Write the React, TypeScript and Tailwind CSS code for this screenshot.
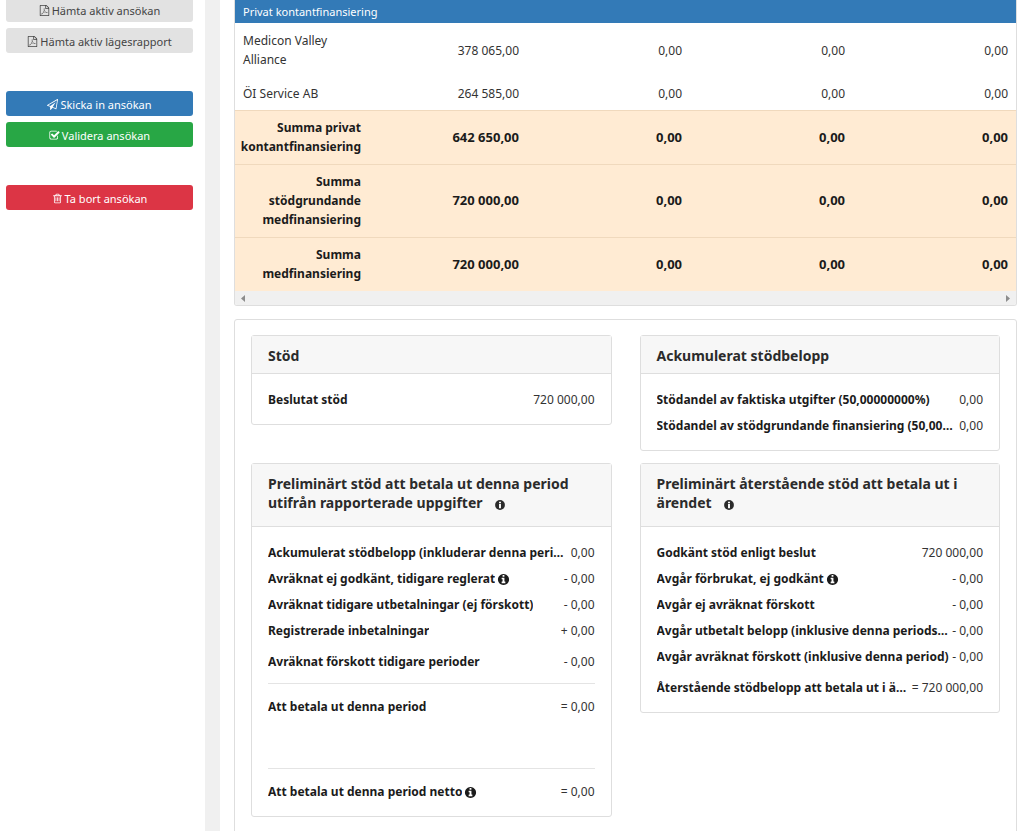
import React from "react"
import clsx from "clsx"

const icons = {
  pdf: "M1596 380q28 28 48 76t20 88v1152q0 40-28 68t-68 28h-1344q-40 0-68-28t-28-68v-1600q0-40 28-68t68-28h896q40 0 88 20t76 48zm-444-244v376h376q-10-29-22-41l-313-313q-12-12-41-22zm384 1528v-1024h-416q-40 0-68-28t-28-68v-416h-768v1536h1280zm-514-593q33 26 84 56 59-7 117-7 147 0 177 49 16 22 2 52 0 1-1 2l-2 2v1q-6 38-71 38-48 0-115-20t-130-53q-221 24-392 83-153 262-242 262-15 0-28-7l-24-12q-1-1-6-5-10-10-6-36 9-40 56-91.5t132-96.5q14-9 23 6 2 2 2 4 52-85 107-197 68-136 104-262-24-82-30.5-159.5t6.5-127.5q11-40 42-40h22q23 0 35 15 18 21 9 68-2 6-4 8 1 3 1 8v30q-2 123-14 192 55 164 146 238zm-576 411q52-24 137-158-51 40-87.5 84t-49.5 74zm398-920q-15 42-2 132 1-7 7-44 0-3 7-43 1-4 4-8-1-1-1-2-1-2-1-3-1-22-13-36 0 1-1 2v2zm-124 661q135-54 284-81-2-1-13-9.5t-16-13.5q-76-67-127-176-27 86-83 197-30 56-45 83zm646-16q-24-24-140-24 76 28 124 28 14 0 18-1 0-1-2-3z",
  send: "M1764 11q33 24 27 64l-256 1536q-5 29-32 45-14 8-31 8-11 0-24-5l-527-215-298 327q-18 21-47 21-14 0-23-4-19-7-30-23.5t-11-36.5v-452l-472-193q-37-14-40-55-3-39 32-59l1664-960q35-21 68 2zm-342 1499l221-1323-1434 827 336 137 863-639-478 797z",
  check: "M1472 930v318q0 119-84.5 203.5t-203.5 84.5h-832q-119 0-203.5-84.5t-84.5-203.5v-832q0-119 84.5-203.5t203.5-84.5h832q63 0 117 25 15 7 18 23 3 17-9 29l-49 49q-10 10-23 10-3 0-9-2-23-6-45-6h-832q-66 0-113 47t-47 113v832q0 66 47 113t113 47h832q66 0 113-47t47-113v-254q0-13 9-22l64-64q10-10 23-10 6 0 12 3 20 8 20 29zm231-489l-814 814q-24 24-57 24t-57-24l-430-430q-24-24-24-57t24-57l110-110q24-24 57-24t57 24l263 263 647-647q24-24 57-24t57 24l110 110q24 24 24 57t-24 57z",
  trash: "M704 736v576q0 14-9 23t-23 9h-64q-14 0-23-9t-9-23v-576q0-14 9-23t23-9h64q14 0 23 9t9 23zm256 0v576q0 14-9 23t-23 9h-64q-14 0-23-9t-9-23v-576q0-14 9-23t23-9h64q14 0 23 9t9 23zm256 0v576q0 14-9 23t-23 9h-64q-14 0-23-9t-9-23v-576q0-14 9-23t23-9h64q14 0 23 9t9 23zm128 724v-948h-896v948q0 22 7 40.5t14.5 27 10.5 8.5h832q3 0 10.5-8.5t14.5-27 7-40.5zm-672-1076h448l-48-117q-7-9-17-11h-317q-10 2-17 11zm928 32v64q0 14-9 23t-23 9h-96v948q0 83-47 143.5t-113 60.5h-832q-66 0-113-58.5t-47-141.5v-952h-96q-14 0-23-9t-9-23v-64q0-14 9-23t23-9h309l70-167q15-37 54-63t79-26h320q40 0 79 26t54 63l70 167h309q14 0 23 9t9 23z",
  info: "M1152 1376v-160q0-14-9-23t-23-9h-96v-512q0-14-9-23t-23-9h-320q-14 0-23 9t-9 23v160q0 14 9 23t23 9h96v320h-96q-14 0-23 9t-9 23v160q0 14 9 23t23 9h448q14 0 23-9t9-23zm-128-896v-160q0-14-9-23t-23-9h-192q-14 0-23 9t-9 23v160q0 14 9 23t23 9h192q14 0 23-9t9-23zm640 416q0 209-103 385.5t-279.5 279.5-385.5 103-385.5-103-279.5-279.5-103-385.5 103-385.5 279.5-279.5 385.5-103 385.5 103 279.5 279.5 103 385.5z",
}

function Icon({ name, className }: { name: keyof typeof icons; className?: string }) {
  return (
    <svg viewBox="0 0 1792 1792" fill="currentColor" aria-hidden="true" className={clsx("shrink-0", className)}>
      <path d={icons[name]} />
    </svg>
  )
}

function HeadingInfo() {
  return (
    <svg viewBox="0 0 20 20" aria-hidden="true" className="ml-3 inline-block h-[10px] w-[10px] align-[-2px]">
      <circle cx="10" cy="10" r="9.8" fill="currentColor" />
      <path d="M8 3.4h4v2.8H8zM8 7.4h4v9.2H8z" fill="#f7f7f7" />
    </svg>
  )
}

interface SideButtonProps {
  icon: keyof typeof icons
  className: string
  children: React.ReactNode
}

function SideButton({ icon, className, children }: SideButtonProps) {
  return (
    <button
      type="button"
      className={clsx("flex h-[25px] w-full items-center justify-center gap-[2px] rounded-[3px] pt-[2px] text-[11px] leading-[19px]", className)}
    >
      <Icon name={icon} className="h-[11px] w-[11px]" />
      {children}
    </button>
  )
}

const financiers = [
  { name: "Medicon Valley Alliance", values: ["378 065,00", "0,00", "0,00", "0,00"] },
  { name: "ÖI Service AB", values: ["264 585,00", "0,00", "0,00", "0,00"] },
]

const sums = [
  { name: "Summa privat kontantfinansiering", values: ["642 650,00", "0,00", "0,00", "0,00"] },
  { name: "Summa stödgrundande medfinansiering", values: ["720 000,00", "0,00", "0,00", "0,00"] },
  { name: "Summa medfinansiering", values: ["720 000,00", "0,00", "0,00", "0,00"] },
]

function FinancingTable() {
  return (
    <div className="overflow-hidden rounded-b-[3px] border-x border-b border-[#dedede]">
      <table className="w-full table-fixed border-separate border-spacing-0 text-[12px] leading-[19px]">
        <colgroup>
          <col className="w-[134px]" />
          <col className="w-[158px]" />
          <col />
          <col />
          <col />
        </colgroup>
        <thead>
          <tr>
            <th colSpan={5} className="bg-[#337ab7] px-2 py-[2px] text-left text-[11px] font-normal text-white">
              Privat kontantfinansiering
            </th>
          </tr>
        </thead>
        <tbody>
          {financiers.map((row) => (
            <tr key={row.name}>
              <td className="px-2 pt-2 pb-[7px]">{row.name}</td>
              {row.values.map((value, i) => (
                <td key={i} className="px-2 pt-2 pb-[7px] text-right">{value}</td>
              ))}
            </tr>
          ))}
        </tbody>
        <tfoot className="bg-[#ffebd3] text-[#1b1b1b]">
          {sums.map((row) => (
            <tr key={row.name}>
              <th scope="row" className="border-t border-[#f0d9bd] pt-[7px] pr-2 pb-2 pl-1 text-right font-bold">{row.name}</th>
              {row.values.map((value, i) => (
                <td key={i} className="border-t border-[#f0d9bd] px-2 pt-[7px] pb-2 text-right text-[13px] font-bold">{value}</td>
              ))}
            </tr>
          ))}
        </tfoot>
      </table>
      <div className="flex h-[14px] items-center justify-between bg-[#f0f0f0] px-[6px] text-[#8c8c8c]">
        <svg viewBox="0 0 4 7" className="h-[7px] w-1" fill="currentColor"><path d="M4 0v7L0 3.5z" /></svg>
        <svg viewBox="0 0 4 7" className="h-[7px] w-1" fill="currentColor"><path d="M0 0v7l4-3.5z" /></svg>
      </div>
    </div>
  )
}

interface PanelProps {
  title: string
  info?: boolean
  children: React.ReactNode
}

function Panel({ title, info, children }: PanelProps) {
  return (
    <section className="min-w-0 rounded-[3px] border border-[#dedede] bg-white">
      <header className={clsx("border-b border-[#dedede] bg-[#f7f7f7] px-4 pt-[10px] pb-2", info && "min-h-[63px]")}>
        <h3 className="text-[14px] leading-[19px] font-bold text-[#2b2b2b]">
          {title}
          {info && <HeadingInfo />}
        </h3>
      </header>
      <dl className="px-4 pt-[13px] pb-[11px]">{children}</dl>
    </section>
  )
}

interface RowProps {
  label: string
  value: string
  info?: boolean
  className?: string
}

function Row({ label, value, info, className }: RowProps) {
  return (
    <div className={clsx("flex h-[26px] items-center justify-between text-[12px]", className)}>
      <dt className="flex min-w-0 items-center gap-[2px] font-bold text-[#1b1b1b]">
        <span className="truncate">{label}</span>
        {info && <Icon name="info" className="h-[13px] w-[13px]" />}
      </dt>
      <dd className="pl-[2px] whitespace-nowrap">{value}</dd>
    </div>
  )
}

export default function App() {
  return (
    <div className="flex h-screen overflow-hidden bg-white font-['Noto_Sans','Open_Sans',sans-serif] text-[#333]">
      <aside className="-mt-[3px] w-[205px] shrink-0 pr-3 pl-[6px]">
        <div className="flex flex-col gap-[6px]">
          <SideButton icon="pdf" className="bg-[#e2e2e2] text-[#444]">Hämta aktiv ansökan</SideButton>
          <SideButton icon="pdf" className="bg-[#e2e2e2] text-[#444]">Hämta aktiv lägesrapport</SideButton>
        </div>
        <div className="mt-[38px] flex flex-col gap-[6px]">
          <SideButton icon="send" className="bg-[#337ab7] text-white">Skicka in ansökan</SideButton>
          <SideButton icon="check" className="bg-[#28a745] text-white">Validera ansökan</SideButton>
        </div>
        <div className="mt-[38px]">
          <SideButton icon="trash" className="bg-[#dc3545] text-white">Ta bort ansökan</SideButton>
        </div>
      </aside>
      <div className="w-[15px] shrink-0 bg-[#f0f0f0]" />
      <main className="min-w-0 flex-1 pr-[7px] pl-[14px]">
        <FinancingTable />
        <div className="mt-[13px] grid grid-cols-2 items-start gap-x-7 gap-y-3 rounded-[3px] border border-[#dedede] px-4 pt-[15px] pb-8">
          <Panel title="Stöd">
            <Row label="Beslutat stöd" value="720 000,00" />
          </Panel>
          <Panel title="Ackumulerat stödbelopp">
            <Row label="Stödandel av faktiska utgifter (50,00000000%)" value="0,00" />
            <Row label="Stödandel av stödgrundande finansiering (50,00000000%)" value="0,00" />
          </Panel>
          <Panel title="Preliminärt stöd att betala ut denna period utifrån rapporterade uppgifter" info>
            <Row label="Ackumulerat stödbelopp (inkluderar denna period)" value="0,00" />
            <Row label="Avräknat ej godkänt, tidigare reglerat" value="- 0,00" info />
            <Row label="Avräknat tidigare utbetalningar (ej förskott)" value="- 0,00" />
            <Row label="Registrerade inbetalningar" value="+ 0,00" />
            <Row label="Avräknat förskott tidigare perioder" value="- 0,00" className="mt-[5px]" />
            <Row label="Att betala ut denna period" value="= 0,00" className="mt-2 box-content border-t border-[#e4e4e4] pt-[10px]" />
            <Row label="Att betala ut denna period netto" value="= 0,00" info className="mt-12 box-content border-t border-[#e4e4e4] pt-[10px]" />
          </Panel>
          <Panel title="Preliminärt återstående stöd att betala ut i ärendet" info>
            <Row label="Godkänt stöd enligt beslut" value="720 000,00" />
            <Row label="Avgår förbrukat, ej godkänt" value="- 0,00" info />
            <Row label="Avgår ej avräknat förskott" value="- 0,00" />
            <Row label="Avgår utbetalt belopp (inklusive denna periods utbetalning)" value="- 0,00" />
            <Row label="Avgår avräknat förskott (inklusive denna period)" value="- 0,00" />
            <Row label="Återstående stödbelopp att betala ut i ärendet" value="= 720 000,00" className="mt-[5px]" />
          </Panel>
        </div>
      </main>
    </div>
  )
}
